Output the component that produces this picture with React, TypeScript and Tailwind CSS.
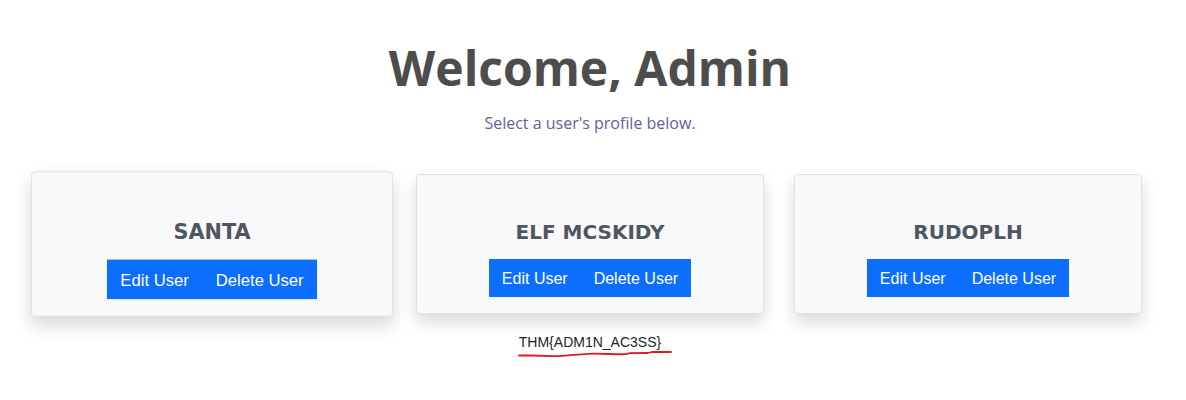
const users = [
  { name: "Santa", raised: true },
  { name: "Elf McSkidy", raised: false },
  { name: "Rudoplh", raised: false },
];

function UserCard({ name, raised }: { name: string; raised: boolean }) {
  return (
    <article
      className={`flex flex-col items-center rounded border border-[#dee0e3] bg-[#f8f9fb] px-4 pt-[43px] pb-4 shadow-[0_8px_16px_rgba(0,0,0,0.15)] ${
        raised ? "scale-104" : ""
      }`}
    >
      <h2 className="mb-[13px] font-['DejaVu_Sans',sans-serif] text-xl leading-7 font-bold text-[#4f565e] uppercase">
        {name}
      </h2>
      <div className="flex bg-[#0d6efd] text-base leading-6 text-white">
        <button type="button" className="px-[13px] pt-2 pb-[6px]">
          Edit User
        </button>
        <button type="button" className="px-[13px] pt-2 pb-[6px]">
          Delete User
        </button>
      </div>
    </article>
  );
}

export default function App() {
  return (
    <main className="flex flex-col bg-white pt-9 pr-11 pl-[38px] font-['Liberation_Sans',Arial,sans-serif]">
      <header className="flex flex-col items-center text-center font-['Open_Sans',sans-serif]">
        <h1 className="text-5xl leading-16 font-bold text-[#4d4d4d]">Welcome, Admin</h1>
        <p className="mt-[11px] text-base leading-6 text-[#6161a0]">Select a user's profile below.</p>
      </header>
      <section className="mt-[39px] grid grid-cols-3 gap-[30px]">
        {users.map((user) => (
          <UserCard key={user.name} name={user.name} raised={user.raised} />
        ))}
      </section>
      <div className="mt-[18px] flex flex-col items-center text-sm leading-5 text-[#212529]">
        <p>{"THM{ADM1N_AC3SS}"}</p>
        <svg
          aria-hidden="true"
          className="-mt-0.5 ml-3 h-2 w-[156px]"
          viewBox="0 0 156 8"
          fill="none"
          stroke="#dc1a1f"
          strokeWidth="1.8"
          strokeLinecap="round"
          strokeLinejoin="round"
        >
          <path d="M1 5.5H14L33 6.2C48 6.4 58 4.2 70 3.8C84 3.3 95 4.6 108 4.2L112 3.2L130 3L134 2H153" />
        </svg>
      </div>
    </main>
  );
}
